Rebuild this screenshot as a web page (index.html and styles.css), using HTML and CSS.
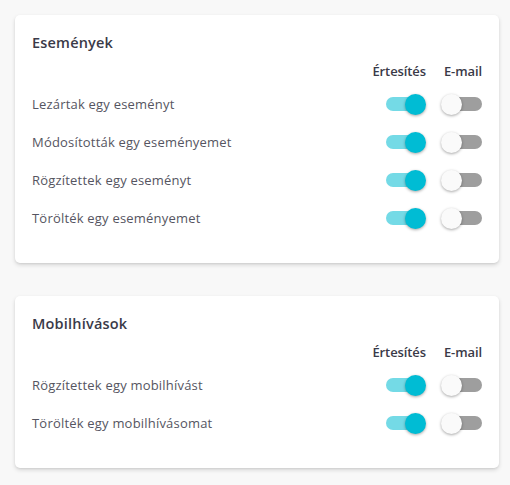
FILE: index.html
```html
<!DOCTYPE html>
<html lang="hu">
<head>
<meta charset="utf-8">
<link rel="stylesheet" href="styles.css">
</head>
<body>
<div class="page">
  <section class="card">
    <h2 class="title">Események</h2>
    <div class="grid">
      <div></div><div class="head">Értesítés</div><div class="head">E-mail</div>
      <div class="label">Lezártak egy eseményt</div>
      <div class="cell"><span class="sw on"><span class="knob"></span></span></div>
      <div class="cell"><span class="sw"><span class="knob"></span></span></div>
      <div class="label">Módosították egy eseményemet</div>
      <div class="cell"><span class="sw on"><span class="knob"></span></span></div>
      <div class="cell"><span class="sw"><span class="knob"></span></span></div>
      <div class="label">Rögzítettek egy eseményt</div>
      <div class="cell"><span class="sw on"><span class="knob"></span></span></div>
      <div class="cell"><span class="sw"><span class="knob"></span></span></div>
      <div class="label">Törölték egy eseményemet</div>
      <div class="cell"><span class="sw on"><span class="knob"></span></span></div>
      <div class="cell"><span class="sw"><span class="knob"></span></span></div>
    </div>
  </section>
  <section class="card">
    <h2 class="title">Mobilhívások</h2>
    <div class="grid">
      <div></div><div class="head">Értesítés</div><div class="head">E-mail</div>
      <div class="label">Rögzítettek egy mobilhívást</div>
      <div class="cell"><span class="sw on"><span class="knob"></span></span></div>
      <div class="cell"><span class="sw"><span class="knob"></span></span></div>
      <div class="label">Törölték egy mobilhívásomat</div>
      <div class="cell"><span class="sw on"><span class="knob"></span></span></div>
      <div class="cell"><span class="sw"><span class="knob"></span></span></div>
    </div>
  </section>
</div>
</body>
</html>
```
FILE: styles.css
```css
html, body {
  margin: 0;
  padding: 0;
  background: #f8f8f8;
}
body {
  font-family: "Open Sans", "Noto Sans", sans-serif;
  color: #3d3d4a;
}
.page {
  padding: 15px 11px 15px 15px;
  display: flex;
  flex-direction: column;
  gap: 33px;
}
.card {
  background: #fff;
  border-radius: 5px;
  box-shadow: 0 2px 4px rgba(0,0,0,0.14), 0 1px 2px rgba(0,0,0,0.06);
  padding: 18px 17px 26px 17px;
}
.title {
  margin: 0 0 8px 0;
  font-size: 14.5px;
  font-weight: 600;
  line-height: 20px;
  color: #3a3a48;
  letter-spacing: 0.2px;
}
.grid {
  display: grid;
  grid-template-columns: 1fr auto auto;
  column-gap: 18px;
  grid-auto-rows: 38px;
  grid-template-rows: 24px;
}
.head {
  font-size: 13px;
  font-weight: 600;
  line-height: 20px;
  color: #3a3a48;
  text-align: right;
  letter-spacing: -0.1px;
}
.label {
  font-size: 13px;
  color: #555561;
  display: flex;
  align-items: center;
  letter-spacing: 0.2px;
}
.cell {
  display: flex;
  align-items: center;
  justify-content: flex-end;
}
.sw {
  position: relative;
  width: 38px;
  height: 14px;
  border-radius: 7px;
  background: #9e9e9e;
}
.sw .knob {
  position: absolute;
  top: -3px;
  left: -3px;
  width: 21px;
  height: 21px;
  border-radius: 50%;
  background: #fafafa;
  box-shadow: 0 1px 3px rgba(0,0,0,0.35);
}
.sw.on {
  width: 39px;
  margin-right: 1px;
  background: #74dae6;
}
.sw.on .knob {
  left: auto;
  right: -1px;
  background: #00bcd4;
}
```
